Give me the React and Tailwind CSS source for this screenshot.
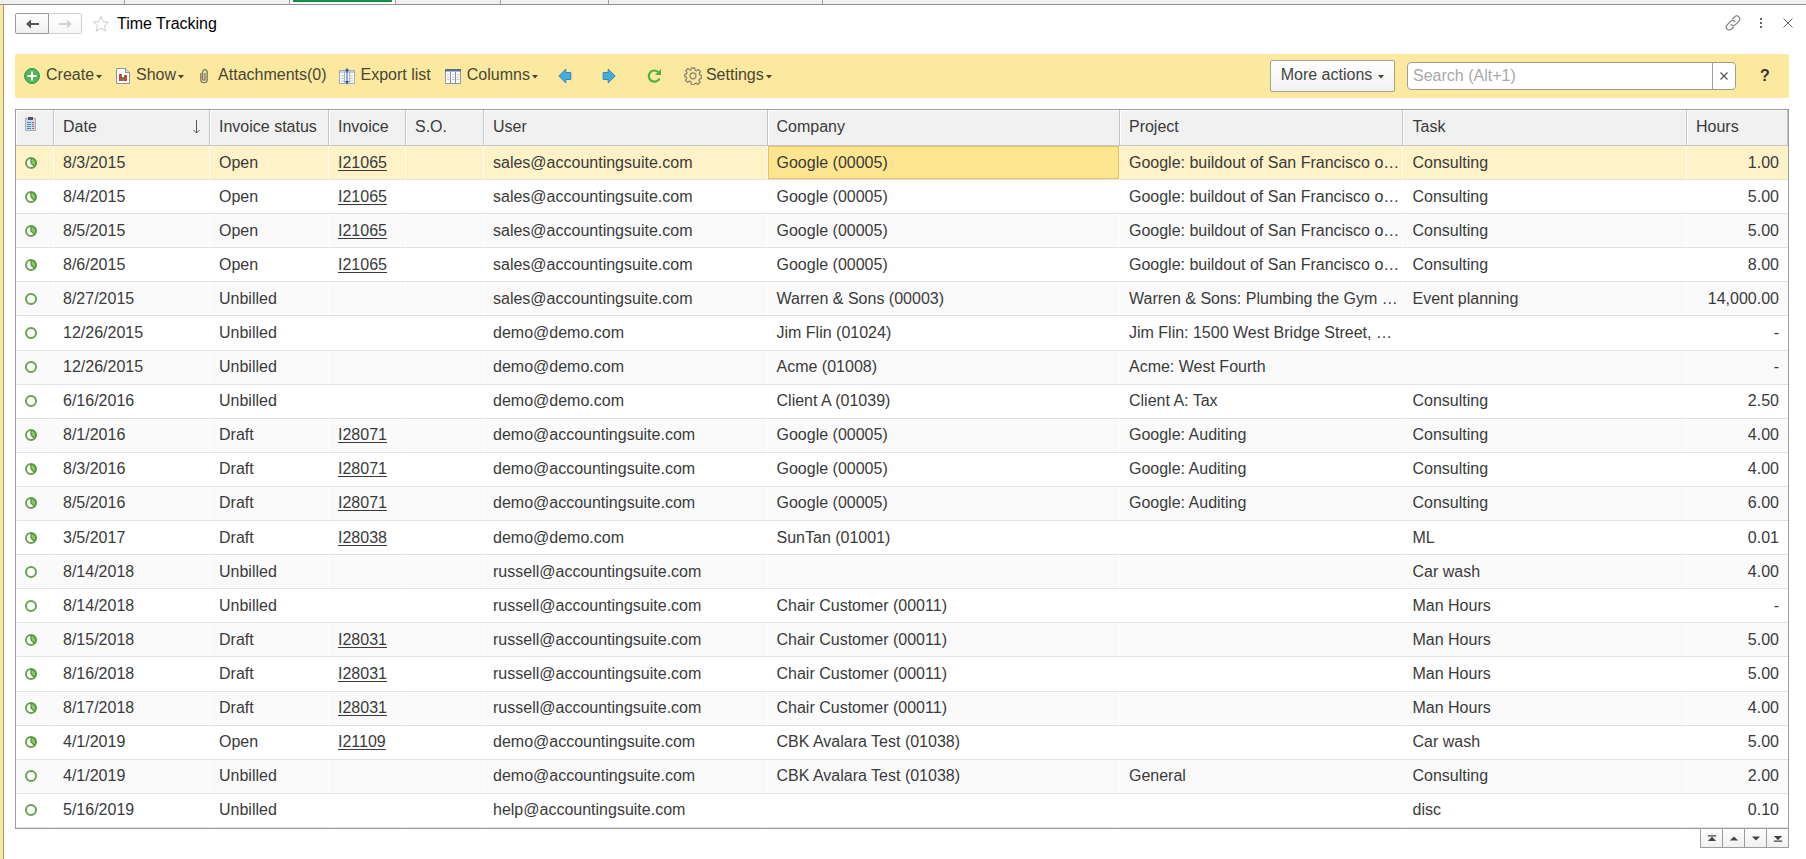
import { useState } from "react";

const rows = [
  { date: "8/3/2015", status: "Open", invoice: "I21065", user: "sales@accountingsuite.com", company: "Google (00005)", project: "Google: buildout of San Francisco o…", task: "Consulting", hours: "1.00" },
  { date: "8/4/2015", status: "Open", invoice: "I21065", user: "sales@accountingsuite.com", company: "Google (00005)", project: "Google: buildout of San Francisco o…", task: "Consulting", hours: "5.00" },
  { date: "8/5/2015", status: "Open", invoice: "I21065", user: "sales@accountingsuite.com", company: "Google (00005)", project: "Google: buildout of San Francisco o…", task: "Consulting", hours: "5.00" },
  { date: "8/6/2015", status: "Open", invoice: "I21065", user: "sales@accountingsuite.com", company: "Google (00005)", project: "Google: buildout of San Francisco o…", task: "Consulting", hours: "8.00" },
  { date: "8/27/2015", status: "Unbilled", user: "sales@accountingsuite.com", company: "Warren & Sons (00003)", project: "Warren & Sons: Plumbing the Gym …", task: "Event planning", hours: "14,000.00" },
  { date: "12/26/2015", status: "Unbilled", user: "demo@demo.com", company: "Jim Flin (01024)", project: "Jim Flin: 1500 West Bridge Street, …", hours: "-" },
  { date: "12/26/2015", status: "Unbilled", user: "demo@demo.com", company: "Acme (01008)", project: "Acme: West Fourth", hours: "-" },
  { date: "6/16/2016", status: "Unbilled", user: "demo@demo.com", company: "Client A (01039)", project: "Client A: Tax", task: "Consulting", hours: "2.50" },
  { date: "8/1/2016", status: "Draft", invoice: "I28071", user: "demo@accountingsuite.com", company: "Google (00005)", project: "Google: Auditing", task: "Consulting", hours: "4.00" },
  { date: "8/3/2016", status: "Draft", invoice: "I28071", user: "demo@accountingsuite.com", company: "Google (00005)", project: "Google: Auditing", task: "Consulting", hours: "4.00" },
  { date: "8/5/2016", status: "Draft", invoice: "I28071", user: "demo@accountingsuite.com", company: "Google (00005)", project: "Google: Auditing", task: "Consulting", hours: "6.00" },
  { date: "3/5/2017", status: "Draft", invoice: "I28038", user: "demo@demo.com", company: "SunTan (01001)", task: "ML", hours: "0.01" },
  { date: "8/14/2018", status: "Unbilled", user: "russell@accountingsuite.com", task: "Car wash", hours: "4.00" },
  { date: "8/14/2018", status: "Unbilled", user: "russell@accountingsuite.com", company: "Chair Customer (00011)", task: "Man Hours", hours: "-" },
  { date: "8/15/2018", status: "Draft", invoice: "I28031", user: "russell@accountingsuite.com", company: "Chair Customer (00011)", task: "Man Hours", hours: "5.00" },
  { date: "8/16/2018", status: "Draft", invoice: "I28031", user: "russell@accountingsuite.com", company: "Chair Customer (00011)", task: "Man Hours", hours: "5.00" },
  { date: "8/17/2018", status: "Draft", invoice: "I28031", user: "russell@accountingsuite.com", company: "Chair Customer (00011)", task: "Man Hours", hours: "4.00" },
  { date: "4/1/2019", status: "Open", invoice: "I21109", user: "demo@accountingsuite.com", company: "CBK Avalara Test (01038)", task: "Car wash", hours: "5.00" },
  { date: "4/1/2019", status: "Unbilled", user: "demo@accountingsuite.com", company: "CBK Avalara Test (01038)", project: "General", task: "Consulting", hours: "2.00" },
  { date: "5/16/2019", status: "Unbilled", user: "help@accountingsuite.com", task: "disc", hours: "0.10" },
];

function Caret() {
  return (
    <svg width="6" height="4" viewBox="0 0 6 4" className="mt-1 shrink-0">
      <path d="M0 0h6L3 3.5z" fill="#4a4530" />
    </svg>
  );
}

function CreateIcon() {
  return (
    <svg width="16" height="16" viewBox="0 0 16 16">
      <circle cx="8" cy="8" r="7.5" fill="#4fb65a" stroke="#36984a" />
      <path d="M8 3.5v9M3.5 8h9" stroke="#fff" strokeWidth="2" />
    </svg>
  );
}

function ShowIcon() {
  return (
    <svg width="14" height="16" viewBox="0 0 14 16">
      <path d="M.5.5h9l4 4v11H.5z" fill="#fdfdfd" stroke="#8f9196" />
      <path d="M9.5.5v4h4" fill="#dcdde0" stroke="#8f9196" />
      <path d="M3 6h3v7H3z" fill="#c8473d" />
      <path d="M6 9h2v4H6z" fill="#4d9a4a" />
      <path d="M8 7h3v6H8z" fill="#c8473d" />
    </svg>
  );
}

function ClipIcon() {
  return (
    <svg width="8" height="16" viewBox="0 0 8 16" fill="none">
      <path d="M.8 5v6.500a3.200 3.200 0 0 0 6.400 0V4a2.300 2.300 0 0 0-4.600 0v7a1.200 1.200 0 0 0 2.400 0V5" stroke="#77736a" strokeWidth="1.300" />
    </svg>
  );
}

function ExportIcon() {
  return (
    <svg width="16" height="17" viewBox="0 0 16 17">
      <path d="M.5 2.5h15v13H.5z" fill="#fbfbfa" stroke="#a3aab3" />
      <path d="M1 3h14v2H1z" fill="#c5cfda" />
      <path d="M2 8h3M2 10.5h3M2 13h3M11 8h3M11 10.5h3M11 13h3" stroke="#c3c9cf" />
      <path d="M5.500 2v13.500M10.500 2v13.500" stroke="#9fb4cb" />
      <path d="M8 0v15" stroke="#2d619a" />
      <path d="M6 13h4l-2 3.500zM6 1.500h4L8 4.500z" fill="#23558f" />
    </svg>
  );
}

function ColumnsIcon() {
  return (
    <svg width="16" height="15" viewBox="0 0 16 15">
      <path d="M.5.5h15v14H.5z" fill="#fcfcfb" stroke="#8e98a5" />
      <path d="M0 0h16v2.500H0z" fill="#54718f" />
      <path d="M5.500 3v11.500M10.500 3v11.500" stroke="#7e93aa" />
      <path d="M2 5.5h2.5M2 8h2.5M2 10.5h2.5M7 5.5h2.5M7 8h2.5M7 10.5h2.5M12 5.5h2.5M12 8h2.5M12 10.5h2.5" stroke="#c3cad2" />
    </svg>
  );
}

function BlueArrow({ flip }) {
  return (
    <svg width="14" height="16" viewBox="0 0 14 16" className={flip ? "rotate-180" : ""}>
      <path d="M.8 8l7-7v3.500h5v7h-5V15z" fill="#41aee3" stroke="#3c86ae" strokeLinejoin="round" />
    </svg>
  );
}

function RefreshIcon() {
  return (
    <svg width="16" height="16" viewBox="0 0 16 16" fill="none">
      <path d="M12.800 4.600A5.600 5.600 0 1 0 13.500 10.500" stroke="#50b140" strokeWidth="2.200" />
      <path d="M15 1v6H9z" fill="#50b140" />
    </svg>
  );
}

function GearIcon() {
  return (
    <svg width="18" height="18" viewBox="0 0 18 18" fill="none" stroke="#8f8872" strokeWidth="1.300" strokeLinejoin="round">
      <path d="M7.400 1h3.200l.4 2.200 1.500.6 1.800-1.300 2.200 2.200-1.300 1.800.6 1.500 1.500.3v3.200l-1.800.4-.6 1.500 1.200 1.800-2.200 2.200-1.800-1.300-1.500.6-.4 1.300H7.400L7 14.700l-1.500-.6-1.800 1.300-2.200-2.200 1.300-1.800-.6-1.500L.7 9.500V7.300l1.700-.3.6-1.500-1.300-1.800 2.200-2.200 1.600 1.300L7 3.200z" />
      <circle cx="9" cy="8.800" r="3" />
    </svg>
  );
}

function StatusIcon({ billed }) {
  return (
    <svg width="12" height="12" viewBox="0 0 12 12" className="block">
      <circle cx="6" cy="6" r="5" fill="#fff" stroke="#6aa150" strokeWidth="2" />
      {billed && (
        <path d="M6 1.500a4.500 4.500 0 0 1 3.300 7.800L6 6z" fill="#8cc765" stroke="#4f9436" strokeWidth="1.200" />
      )}
    </svg>
  );
}

function ClipboardIcon() {
  return (
    <svg width="11" height="15" viewBox="0 0 11 15" className="-mt-1 block">
      <path d="M.5 1.500h10v12H.5z" fill="#c3ddec" stroke="#b3a9b6" />
      <path d="M3 0h5v3H3z" fill="#4c5560" />
      <path d="M2 5.500h4M2 7.500h4M2 9.500h4M2 11.500h4" stroke="#3f8fc4" />
      <path d="M7 5.500h2M7 7.500h2M7 9.500h2M7 11.500h2" stroke="#c45a5f" />
    </svg>
  );
}

function ToolButton({ icon, label, caret, className = "" }) {
  return (
    <button className={`flex items-center whitespace-nowrap ${className}`}>
      {icon}
      <span className="flex items-center gap-0.5 pb-0.5">
        {label}
        {caret && <Caret />}
      </span>
    </button>
  );
}

function TabStrip() {
  return (
    <div className="flex h-[5px] border-b border-[#8f8f8f] bg-[#f0f0f0]">
      <div className="w-[125px] border-r border-[#a0a0a0]" />
      <div className="w-[165px] border-r border-[#a0a0a0]" />
      <div className="w-[106px] border-r border-[#a0a0a0] bg-white px-[3px]">
        <div className="h-0.5 bg-[#0f9246]" />
      </div>
      <div className="w-[105px] border-r border-[#a0a0a0]" />
      <div className="w-[108px] border-r border-[#a0a0a0]" />
      <div className="w-[214px] border-r border-[#a0a0a0]" />
    </div>
  );
}

function TitleBar() {
  return (
    <header className="flex h-[49px] items-start pt-2">
      <button aria-label="Back" className="flex h-[21px] w-[34px] items-center justify-center rounded-l-xs border border-[#9a9a9a] bg-linear-to-b from-white to-[#f0f0f0]">
        <svg width="13" height="10" viewBox="0 0 13 10">
          <path d="M0 5l5-4.500V4h8v2H5v3.500z" fill="#555" />
        </svg>
      </button>
      <button aria-label="Forward" className="flex h-[21px] w-[33px] items-center justify-center rounded-r-xs border border-l-0 border-[#cfcfcf] bg-linear-to-b from-white to-[#f7f7f7]">
        <svg width="13" height="10" viewBox="0 0 13 10">
          <path d="M13 5L8 .5V4H0v2h8v3.500z" fill="#d2d2d2" />
        </svg>
      </button>
      <button aria-label="Favorite" className="ml-2.5 mt-0.5">
        <svg width="18" height="18" viewBox="0 0 18 18" fill="none" stroke="#cdcdcd">
          <path d="M9 1.500l2.100 5.200 5.600.4-4.300 3.600 1.400 5.500L9 13.200l-4.800 3 1.400-5.500L1.300 7.100l5.600-.4z" />
        </svg>
      </button>
      <h1 className="ml-[7px] pt-px text-base leading-5 text-black">Time Tracking</h1>
      <div className="ml-auto flex items-center gap-5 pt-0.5">
        <button aria-label="Copy link" className="-mr-0.5">
          <svg width="16" height="16" viewBox="0 0 24 24" fill="none" stroke="#777" strokeWidth="1.600" strokeLinecap="round">
            <path d="M9 14a4.500 4.500 0 0 0 6.800.3l5-5.200a4.500 4.500 0 0 0-6.400-6.400L11 6" />
            <path d="M15 10a4.500 4.500 0 0 0-6.800-.3l-5 5.200a4.500 4.500 0 0 0 6.400 6.400L13 18" />
          </svg>
        </button>
        <button aria-label="More">
          <svg width="4" height="12" viewBox="0 0 4 12" fill="#666">
            <path d="M1 1h2v2H1zM1 5h2v2H1zM1 9h2v2H1z" />
          </svg>
        </button>
        <button aria-label="Close" className="-mr-1">
          <svg width="10" height="10" viewBox="0 0 10 10" stroke="#666">
            <path d="M.5.5l9 9M9.500.5l-9 9" />
          </svg>
        </button>
      </div>
    </header>
  );
}

function Toolbar() {
  const [search, setSearch] = useState("");

  return (
    <div className="flex h-11 items-center rounded-xs bg-[#fbe99f] pl-[9px] pr-[19px] text-[#4a4633]">
      <ToolButton icon={<CreateIcon />} label="Create" caret className="gap-1.5" />
      <ToolButton icon={<ShowIcon />} label="Show" caret className="ml-3.5 gap-1.5" />
      <ToolButton icon={<ClipIcon />} label="Attachments(0)" className="ml-4 gap-2.5" />
      <ToolButton icon={<ExportIcon />} label="Export list" className="ml-3 gap-1.5" />
      <ToolButton icon={<ColumnsIcon />} label="Columns" caret className="ml-3.5 gap-1.5" />
      <button aria-label="Previous" className="ml-5"><BlueArrow /></button>
      <button aria-label="Next" className="ml-[30px]"><BlueArrow flip /></button>
      <button aria-label="Refresh" className="ml-[30px]"><RefreshIcon /></button>
      <ToolButton icon={<GearIcon />} label="Settings" caret className="ml-[22px] gap-1" />

      <button className="ml-auto flex h-8 w-[125px] items-center justify-center gap-1.5 whitespace-nowrap rounded-xs border border-[#a5a290] bg-linear-to-b from-white to-[#f1f1f1] pb-0.5 text-[#444]">
        More actions
        <Caret />
      </button>
      <div className="ml-3 flex h-7 w-[329px] rounded-sm border border-[#a09d8c] bg-white">
        <input
          aria-label="Search"
          className="min-w-0 flex-1 px-[5px] text-[#333] outline-none placeholder:text-[#a9a9a9]"
          placeholder="Search (Alt+1)"
          value={search}
          onChange={(e) => setSearch(e.target.value)}
        />
        <button
          aria-label="Clear search"
          className="flex w-[23px] items-center justify-center border-l border-[#a09d8c]"
          onClick={() => setSearch("")}
        >
          <svg width="8" height="8" viewBox="0 0 8 8" stroke="#555" strokeWidth="1.200">
            <path d="M.5.5l7 7M7.500.5l-7 7" />
          </svg>
        </button>
      </div>
      <button className="ml-6 w-2.5 font-bold text-[#333]">?</button>
    </div>
  );
}

function TimeTable() {
  const head = "h-9 border-b border-r border-[#c4c6c9] bg-[#f1f1f1] px-[9px] pb-0.5 text-left font-normal shadow-[inset_1px_1px_0_#fff]";
  const cell = "border-b border-r border-b-[#e2e2e2] border-r-white/70 p-0 pl-[9px] last:pr-[9px] last:border-r-0";

  return (
    <table className="h-full w-full table-fixed border-separate border-spacing-0 border border-[#9b9da0] text-[#3a3a3a]">
      <colgroup>
        <col className="w-[38px]" />
        <col className="w-[156px]" />
        <col className="w-[119px]" />
        <col className="w-[77px]" />
        <col className="w-[78px]" />
        <col className="w-[16%]" />
        <col />
        <col className="w-[16%]" />
        <col className="w-[16%]" />
        <col className="w-[101px]" />
      </colgroup>
      <thead>
        <tr>
          <th aria-label="Billing" className={head}><ClipboardIcon /></th>
          <th className={head}>
            <span className="flex items-center justify-between">
              Date
              <svg width="7" height="14" viewBox="0 0 7 14" fill="none" stroke="#555">
                <path d="M3.500 0v13M.5 10l3 3 3-3" />
              </svg>
            </span>
          </th>
          <th className={head}>Invoice status</th>
          <th className={head}>Invoice</th>
          <th className={head}>S.O.</th>
          <th className={head}>User</th>
          <th className={head}>Company</th>
          <th className={head}>Project</th>
          <th className={head}>Task</th>
          <th className={head}>Hours</th>
        </tr>
      </thead>
      <tbody className="whitespace-nowrap">
        {rows.map((row, i) => (
          <tr key={i} className={i === 0 ? "bg-[#fdf2c8]" : "even:bg-white odd:bg-[#fafafa]"}>
            <td className={cell}><StatusIcon billed={Boolean(row.invoice)} /></td>
            <td className={cell}>{row.date}</td>
            <td className={cell}>{row.status}</td>
            <td className={cell}>
              {row.invoice && <a href="#" className="underline underline-offset-2">{row.invoice}</a>}
            </td>
            <td className={cell} />
            <td className={cell}>{row.user}</td>
            <td className={i === 0 ? `${cell} bg-[#fde68f] shadow-[inset_0_0_0_1px_#e6c65c]` : cell}>{row.company}</td>
            <td className={cell}>{row.project}</td>
            <td className={cell}>{row.task}</td>
            <td className={`${cell} text-right`}>{row.hours}</td>
          </tr>
        ))}
      </tbody>
    </table>
  );
}

function Pager() {
  const buttons = [
    { label: "First", path: "M1 1h10v1.500H1zM6 3l5 5H1z" },
    { label: "Up", path: "M6 2.500l5 5H1z" },
    { label: "Down", path: "M6 7.500l5-5H1z" },
    { label: "Last", path: "M1 7.500h10V9H1zM6 7L1 2h10z" },
  ];

  return (
    <div className="flex justify-end">
      <div className="flex border-l border-[#9b9da0]">
        {buttons.map((b) => (
          <button key={b.label} aria-label={b.label} className="flex h-[19px] w-[22px] items-center justify-center border-b border-r border-[#9b9da0] bg-linear-to-b from-white to-[#f0f0f0]">
            <svg width="10" height="9" viewBox="0 0 12 10" fill="#444">
              <path d={b.path} />
            </svg>
          </button>
        ))}
      </div>
    </div>
  );
}

export default function App() {
  return (
    <div className="flex h-screen min-h-[820px] flex-col bg-white font-['Liberation_Sans',Arial,sans-serif] text-base leading-5">
      <TabStrip />
      <div className="flex min-h-0 flex-1 border-l-[3px] border-[#fbe99f]">
        <main className="flex min-w-0 flex-1 flex-col border-l border-[#a39a6c] pb-[11px] pl-[11px] pr-[17px]">
          <TitleBar />
          <Toolbar />
          <div className="mt-[11px] min-h-0 flex-1">
            <TimeTable />
          </div>
          <Pager />
        </main>
      </div>
    </div>
  );
}
